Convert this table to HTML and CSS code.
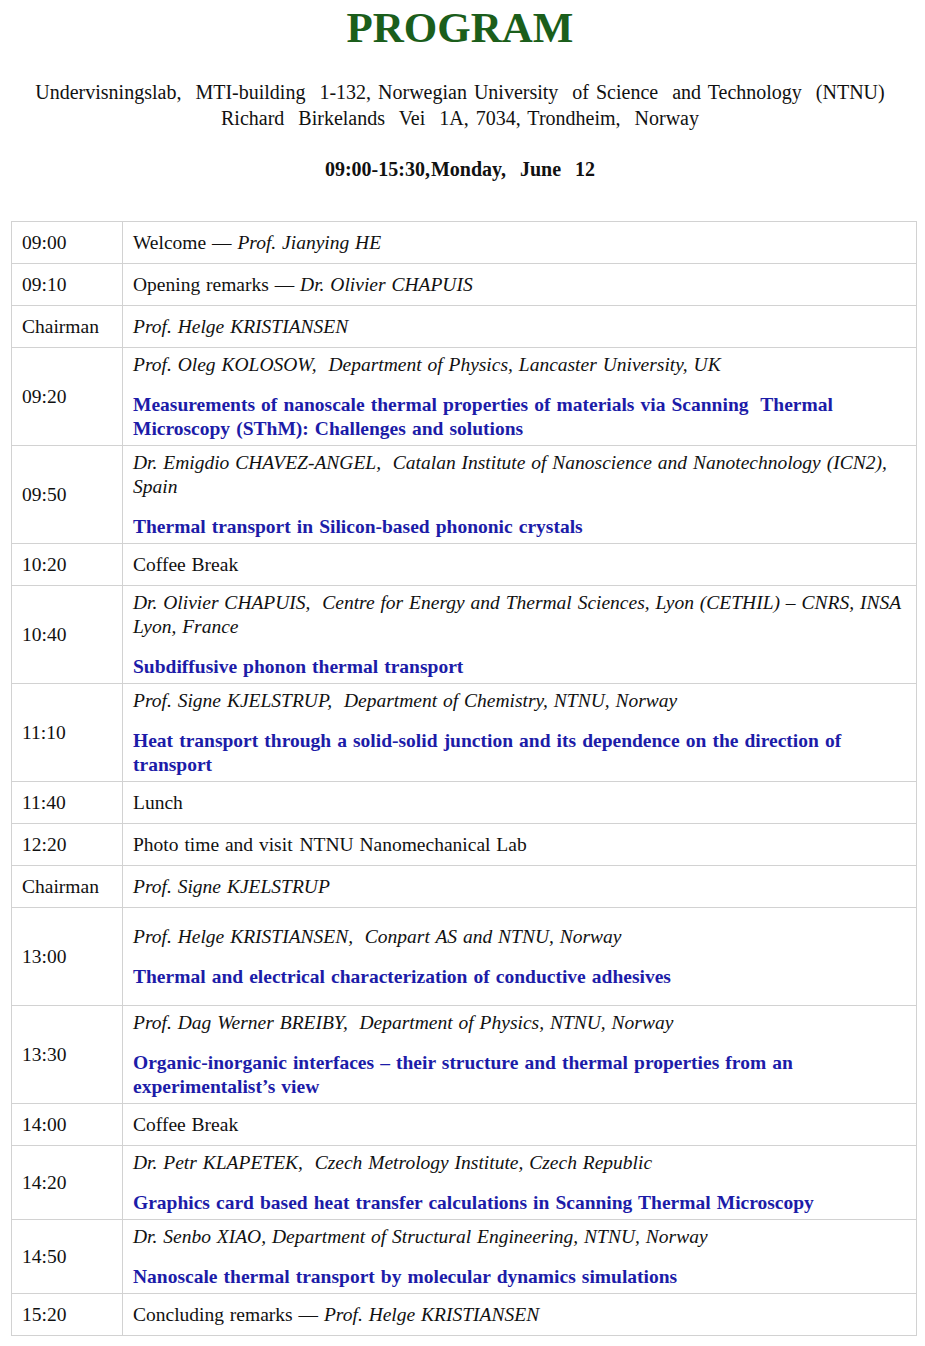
FILE: index.html
```html
<!DOCTYPE html>
<html lang="en">
<head>
<meta charset="utf-8">
<title>Program</title>
<link rel="stylesheet" href="styles.css">
</head>
<body>
<header class="head">
  <h1 class="title">PROGRAM</h1>
  <p class="venue">Undervisningslab,&nbsp; MTI-building&nbsp; 1-132, Norwegian University&nbsp; of Science&nbsp; and Technology&nbsp; (NTNU)<br>Richard&nbsp; Birkelands&nbsp; Vei&nbsp; 1A, 7034, Trondheim,&nbsp; Norway</p>
  <p class="date">09:00-15:30,<span class="tight">Monday,</span>&nbsp; June&nbsp; 12</p>
</header>
<table class="prog">
  <colgroup><col class="c-time"><col class="c-main"></colgroup>
  <tbody>
    <tr><td class="t">09:00</td><td class="s">Welcome — <i>Prof. Jianying HE</i></td></tr>
    <tr><td class="t">09:10</td><td class="s">Opening remarks — <i>Dr. Olivier CHAPUIS</i></td></tr>
    <tr><td class="t">Chairman</td><td class="s"><i>Prof. Helge KRISTIANSEN</i></td></tr>
    <tr><td class="t">09:20</td><td class="m"><p class="au">Prof. Oleg KOLOSOW,&nbsp; Department of Physics, Lancaster University, UK</p><p class="tl">Measurements of nanoscale thermal properties of materials via Scanning&nbsp; Thermal Microscopy (SThM): Challenges and solutions</p></td></tr>
    <tr><td class="t">09:50</td><td class="m"><p class="au">Dr. Emigdio CHAVEZ-ANGEL,&nbsp; Catalan Institute of Nanoscience and Nanotechnology (ICN2), Spain</p><p class="tl">Thermal transport in Silicon-based phononic crystals</p></td></tr>
    <tr><td class="t">10:20</td><td class="s">Coffee Break</td></tr>
    <tr><td class="t">10:40</td><td class="m"><p class="au">Dr. Olivier CHAPUIS,&nbsp; Centre for Energy and Thermal Sciences, Lyon (CETHIL) – CNRS, INSA Lyon, France</p><p class="tl">Subdiffusive phonon thermal transport</p></td></tr>
    <tr><td class="t">11:10</td><td class="m"><p class="au">Prof. Signe KJELSTRUP,&nbsp; Department of Chemistry, NTNU, Norway</p><p class="tl">Heat transport through a solid-solid junction and its dependence on the direction of transport</p></td></tr>
    <tr><td class="t">11:40</td><td class="s">Lunch</td></tr>
    <tr><td class="t">12:20</td><td class="s">Photo time and visit <span class="tight">NTNU</span> Nanomechanical Lab</td></tr>
    <tr><td class="t">Chairman</td><td class="s"><i>Prof. Signe KJELSTRUP</i></td></tr>
    <tr><td class="t">13:00</td><td class="m tall"><p class="au">Prof. Helge KRISTIANSEN,&nbsp; Conpart AS and NTNU, Norway</p><p class="tl">Thermal and electrical characterization of conductive adhesives</p></td></tr>
    <tr><td class="t">13:30</td><td class="m"><p class="au">Prof. Dag Werner BREIBY,&nbsp; Department of Physics, NTNU, Norway</p><p class="tl">Organic-inorganic interfaces – their structure and thermal properties from an experimentalist’s view</p></td></tr>
    <tr><td class="t">14:00</td><td class="s">Coffee Break</td></tr>
    <tr><td class="t">14:20</td><td class="m"><p class="au">Dr. Petr KLAPETEK,&nbsp; Czech Metrology Institute, Czech Republic</p><p class="tl">Graphics card based heat transfer calculations in Scanning Thermal Microscopy</p></td></tr>
    <tr><td class="t">14:50</td><td class="m"><p class="au">Dr. Senbo XIAO, Department of Structural Engineering, NTNU, Norway</p><p class="tl">Nanoscale thermal transport by molecular dynamics simulations</p></td></tr>
    <tr><td class="t">15:20</td><td class="s">Concluding remarks — <i>Prof. Helge KRISTIANSEN</i></td></tr>
  </tbody>
</table>
</body>
</html>
```
FILE: styles.css
```css
html, body {
  margin: 0;
  padding: 0;
  background: #ffffff;
}
body {
  font-family: "Liberation Serif", "Times New Roman", serif;
  color: #111111;
  padding: 0 9px 0 11px;
}
.head {
  text-align: center;
  padding-right: 7px;
}
.title {
  margin: 0;
  padding-top: 3px;
  font-size: 43px;
  line-height: 50px;
  font-weight: bold;
  color: #1b5e1b;
}
.venue {
  margin: 26px 0 0;
  font-size: 20px;
  line-height: 26px;
  word-spacing: 2px;
}
.date {
  margin: 25px 0 0;
  font-size: 20px;
  line-height: 26px;
  font-weight: bold;
  word-spacing: 2px;
}
.tight {
  margin-left: 1px;
}
.prog {
  margin-top: 39px;
  width: 906px;
  border-collapse: collapse;
  border: 1px solid #c8c8c8;
  font-size: 19.5px;
}
.c-time { width: 111px; }
.prog td {
  border: 1px solid #d2d2d2;
  vertical-align: middle;
  padding: 0 9px 0 10px;
  line-height: 24px;
}
.prog td.s {
  padding-top: 9px;
  padding-bottom: 8px;
  word-spacing: 1px;
}
.prog td.m {
  padding-top: 5px;
  padding-bottom: 4px;
}
.prog td.tall {
  padding-top: 17px;
  padding-bottom: 16px;
}
.au {
  margin: 0;
  font-style: italic;
  word-spacing: 1px;
}
.tl {
  margin: 16px 0 0;
  font-weight: bold;
  color: #1c1ca8;
  word-spacing: 1.2px;
}
```
